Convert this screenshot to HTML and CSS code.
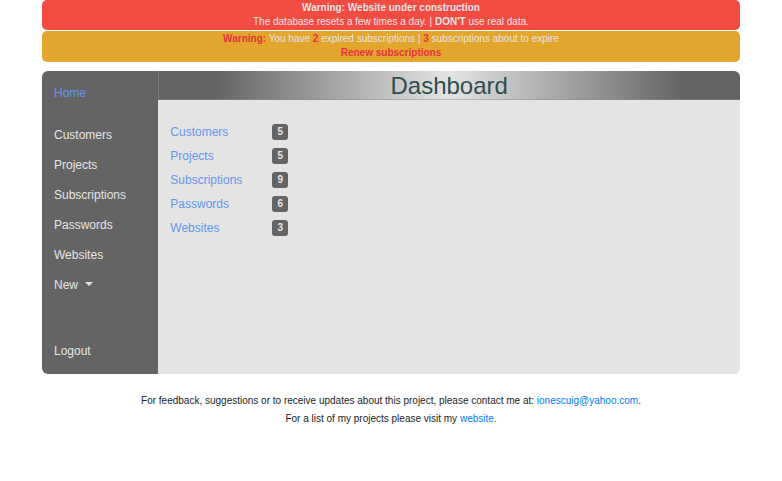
FILE: index.html
```
<!DOCTYPE html>
<html lang="en">
<head>
<meta charset="utf-8">
<meta name="viewport" content="width=device-width, initial-scale=1">
<title>Dashboard</title>
<link rel="stylesheet" href="styles.css">
</head>
<body>
<div class="page">
  <div class="alert alert-danger">
    <p><strong>Warning: Website under construction</strong></p>
    <p>The database resets a few times a day. | <strong>DON'T</strong> use real data.</p>
  </div>
  <div class="alert alert-warning">
    <p><strong>Warning:</strong> You have <strong>2</strong> expired subscriptions | <strong>3</strong> subscriptions about to expire</p>
    <p><a href="#renew">Renew subscriptions</a></p>
  </div>
  <div class="panel">
    <nav class="sidebar">
      <a class="active" href="#home">Home</a>
      <div class="group">
        <a href="#customers">Customers</a>
        <a href="#projects">Projects</a>
        <a href="#subscriptions">Subscriptions</a>
        <a href="#passwords">Passwords</a>
        <a href="#websites">Websites</a>
        <button type="button" class="dropdown">New<span class="caret"></span></button>
      </div>
      <a href="#logout">Logout</a>
    </nav>
    <main class="content">
      <h1>Dashboard</h1>
      <ul class="stats">
        <li><a href="#customers">Customers</a><span class="badge">5</span></li>
        <li><a href="#projects">Projects</a><span class="badge">5</span></li>
        <li><a href="#subscriptions">Subscriptions</a><span class="badge">9</span></li>
        <li><a href="#passwords">Passwords</a><span class="badge">6</span></li>
        <li><a href="#websites">Websites</a><span class="badge">3</span></li>
      </ul>
    </main>
  </div>
  <footer class="footer">
    <p>For feedback, suggestions or to receive updates about this project, please contact me at: <a href="mailto:ionescuig@yahoo.com">ionescuig@yahoo.com</a>.</p>
    <p>For a list of my projects please visit my <a href="#website">website</a>.</p>
  </footer>
</div>
</body>
</html>
```
FILE: styles.css
```
* {
  box-sizing: border-box;
}

body {
  margin: 0;
  background: #fff;
  color: #212529;
  font-family: "Liberation Sans", Arial, sans-serif;
  font-size: 12px;
  line-height: 18px;
}

p {
  margin: 0;
}

a {
  text-decoration: none;
}

.page {
  margin: 0 42px;
}

.alert {
  border-radius: 5px;
  color: #e4e4e4;
  font-size: 10px;
  line-height: 14px;
  text-align: center;
}

.alert-danger {
  padding: 1px 0;
  background: #f24b42;
}

.alert-warning {
  margin-top: 1px;
  padding: 1px 0 2px;
  background: #e3a52c;
}

.alert-warning strong,
.alert-warning a {
  color: #e5333f;
  font-weight: bold;
}

.panel {
  display: grid;
  grid-template-columns: 1fr 5fr;
  margin-top: 9px;
  border-radius: 6px;
  overflow: hidden;
}

.sidebar {
  display: flex;
  flex-direction: column;
  padding: 7px 0 8px;
  background: #646464;
}

.sidebar a,
.dropdown {
  display: block;
  padding: 6px 12px;
  color: #e4e4e4;
}

.sidebar .active {
  color: #6495ed;
}

.group {
  margin: 12px 0 36px;
}

.dropdown {
  border: 0;
  background: none;
  font: inherit;
  cursor: pointer;
}

.caret {
  display: inline-block;
  margin-left: 7px;
  border: 4px solid transparent;
  border-top-color: #e4e4e4;
  border-bottom: 0;
  vertical-align: 3px;
}

.content {
  background: #e4e4e4;
}

h1 {
  margin: 0;
  background: linear-gradient(90deg, #646464 10%, #e4e4e4 50%, #646464 90%);
  box-shadow: inset 1px -1px #8c8c8c80;
  color: #2f4f4f;
  font-size: 24px;
  font-weight: normal;
  line-height: 29px;
  text-align: center;
}

.stats {
  display: grid;
  grid-template-columns: max-content max-content;
  column-gap: 30px;
  margin: 0;
  padding: 20px 12px;
  list-style: none;
  line-height: 24px;
}

.stats li {
  display: grid;
  grid-column: span 2;
  grid-template-columns: subgrid;
  align-items: center;
}

.stats a {
  color: #6495ed;
}

.badge {
  padding: 0 5px;
  border-radius: 3px;
  background: #646464;
  color: #e4e4e4;
  font-size: 10px;
  font-weight: bold;
  line-height: 16px;
}

.footer {
  margin-top: 18px;
  font-size: 10px;
  text-align: center;
}

.footer a {
  color: #007bff;
}
```
